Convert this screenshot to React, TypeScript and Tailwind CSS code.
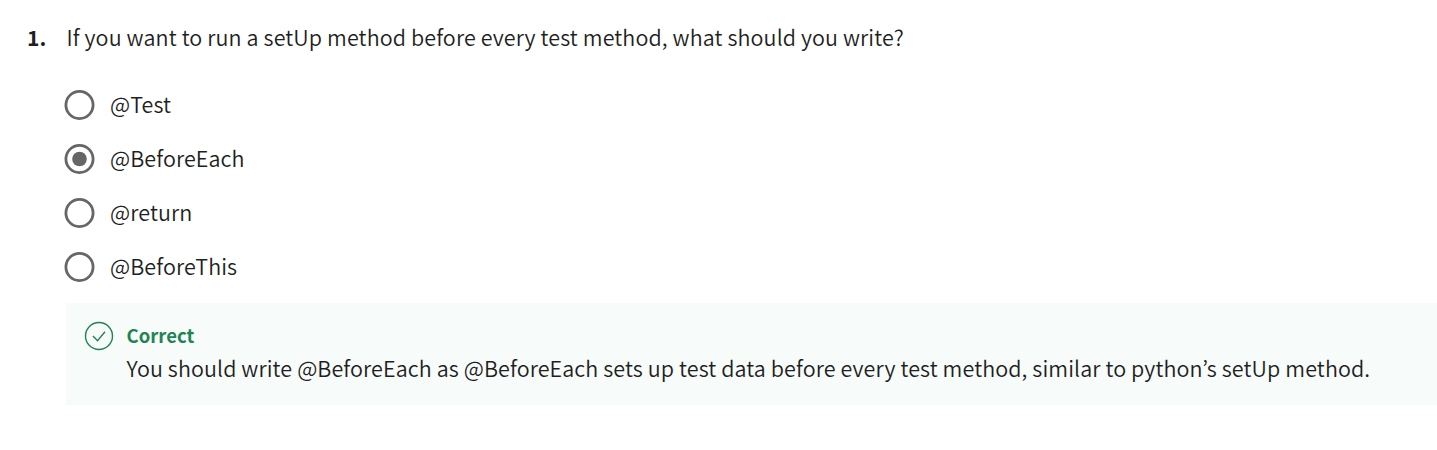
const options = ["@Test", "@BeforeEach", "@return", "@BeforeThis"];
const selected = 1;

function Radio({ checked }: { checked: boolean }) {
  return (
    <svg className="mb-px h-[30px] w-[31px] shrink-0" viewBox="0 0 31 30">
      <circle cx="15.5" cy="15" r="13.6" fill="none" stroke="#666" strokeWidth="2.8" />
      {checked && <circle cx="15.5" cy="15" r="7.3" fill="#666" />}
    </svg>
  );
}

export default function App() {
  return (
    <main className="h-[450px] w-full overflow-hidden bg-white pt-[19px] font-['Noto_Sans_CJK_KR',sans-serif] font-[350] text-[#1f1f1f]">
      <div className="flex h-9 items-center text-[21.5px] leading-9 whitespace-nowrap">
        <span className="w-[66.5px] shrink-0 pl-[27px] text-[21px] font-bold">1.</span>
        <h1 className="tracking-[0.1px]">If you want to run a setUp method before every test method, what should you write?</h1>
      </div>
      <ul className="mt-[23px] pl-[64px]">
        {options.map((option, i) => (
          <li key={option} className="flex h-[54px] items-center gap-[15px] text-[21.5px] tracking-[0.1px]">
            <Radio checked={i === selected} />
            <span className="pb-px">{option}</span>
          </li>
        ))}
      </ul>
      <section className="mt-[9px] ml-[65.5px] flex h-[102px] gap-[13px] bg-[#f7fbfa] pt-4 pl-[18px] whitespace-nowrap">
        <svg className="mt-[2px] size-[30px] shrink-0" viewBox="0 0 30 30" fill="none" stroke="#1f8354" strokeWidth="1.4">
          <circle cx="15" cy="15" r="13.5" />
          <path d="m9 15 4.5 4.8L21 10.8" />
        </svg>
        <div>
          <h2 className="h-8 text-[18.5px] leading-8 font-bold text-[#1f8354]">Correct</h2>
          <p className="text-[21.5px] leading-[33px] tracking-[0.1px]">You should write @BeforeEach as @BeforeEach sets up test data before every test method, similar to python’s setUp method.</p>
        </div>
      </section>
    </main>
  );
}
